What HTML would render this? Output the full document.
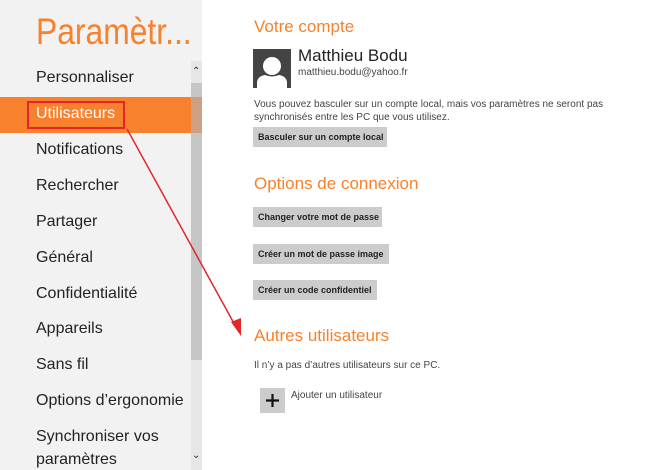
<!DOCTYPE html>
<html><head><meta charset="utf-8"><style>
body{margin:0;width:650px;height:470px;overflow:hidden;background:#fff;font-family:"Liberation Sans",sans-serif;position:relative}
.a{position:absolute;white-space:nowrap}
#left{position:absolute;left:0;top:0;width:202px;height:470px;background:#f2f2f2}
.nav{position:absolute;left:36px;font-size:16px;color:#222;line-height:20px;white-space:nowrap}
.btn{position:absolute;left:253px;height:20px;background:#cccccc;font-size:9px;font-weight:bold;color:#222;line-height:20px;padding-left:5px;box-sizing:border-box;white-space:nowrap;overflow:hidden}
.h{position:absolute;left:254px;font-size:17px;color:#f7812c;line-height:20px;white-space:nowrap}
.t{position:absolute;font-size:10px;color:#444;line-height:13px;white-space:nowrap}
</style></head><body>
<div id="left"></div>
<div class="a" style="left:36px;top:12px;font-size:37px;color:#f7812c;line-height:40px;transform:scaleX(0.86);transform-origin:left">Paramètr...</div>
<div style="position:absolute;left:0;top:97px;width:191px;height:36px;background:#f7812c"></div>
<div style="position:absolute;left:191px;top:61px;width:11px;height:409px;background:#e6e6e6"></div>
<div style="position:absolute;left:191px;top:97px;width:11px;height:36px;background:#f0a067"></div>
<div style="position:absolute;left:191px;top:83px;width:11px;height:277px;background:rgba(160,160,160,0.45)"></div>
<div class="a" style="left:192px;top:66px;font-size:10px;color:#333">&#8963;</div>
<div class="a" style="left:192px;top:450px;font-size:10px;color:#333">&#8964;</div>
<div class="nav" style="top:68px">Personnaliser</div>
<div class="nav" style="top:104px;color:#fff">Utilisateurs</div>
<div style="position:absolute;left:27px;top:101px;width:94px;height:24px;border:2px solid #e3262b"></div>
<div class="nav" style="top:140px">Notifications</div>
<div class="nav" style="top:176px">Rechercher</div>
<div class="nav" style="top:212px">Partager</div>
<div class="nav" style="top:248px">Général</div>
<div class="nav" style="top:284px">Confidentialité</div>
<div class="nav" style="top:319px">Appareils</div>
<div class="nav" style="top:355px">Sans fil</div>
<div class="nav" style="top:391px">Options d’ergonomie</div>
<div class="nav" style="top:427px">Synchroniser vos</div>
<div class="nav" style="top:450px">paramètres</div>

<div class="h" style="top:17px">Votre compte</div>
<svg style="position:absolute;left:253px;top:49px" width="38" height="39"><rect width="38" height="39" fill="#444"/><circle cx="19" cy="17" r="9" fill="#fff"/><path d="M4 39 V33 Q5 27 12 26 Q19 29 26 26 Q33 27 34 33 V39Z" fill="#fff"/></svg>
<div class="a" style="left:298px;top:46px;font-size:17px;color:#222">Matthieu Bodu</div>
<div class="a" style="left:298px;top:67px;font-size:10px;color:#444">matthieu.bodu@yahoo.fr</div>
<div class="t" style="left:254px;top:98px">Vous pouvez basculer sur un compte local, mais vos paramètres ne seront pas<br>synchronisés entre les PC que vous utilisez.</div>
<div class="btn" style="top:127px;width:134px">Basculer sur un compte local</div>
<div class="h" style="top:174px">Options de connexion</div>
<div class="btn" style="top:207px;width:129px">Changer votre mot de passe</div>
<div class="btn" style="top:244px;width:136px">Créer un mot de passe image</div>
<div class="btn" style="top:280px;width:124px">Créer un code confidentiel</div>
<div class="h" style="top:326px">Autres utilisateurs</div>
<div class="t" style="left:254px;top:359px">Il n’y a pas d’autres utilisateurs sur ce PC.</div>
<svg style="position:absolute;left:260px;top:388px" width="25" height="25"><rect width="25" height="25" fill="#cccccc"/><path d="M12.5 6v13M6 12.5h13" stroke="#111" stroke-width="2.2"/></svg>
<div class="t" style="left:291px;top:389px">Ajouter un utilisateur</div>
<svg style="position:absolute;left:0;top:0" width="650" height="470"><line x1="127" y1="129" x2="236" y2="327" stroke="#e3262b" stroke-width="1.5"/><polygon points="241,336 231,322 241,318" fill="#e3262b"/></svg>
</body></html>
